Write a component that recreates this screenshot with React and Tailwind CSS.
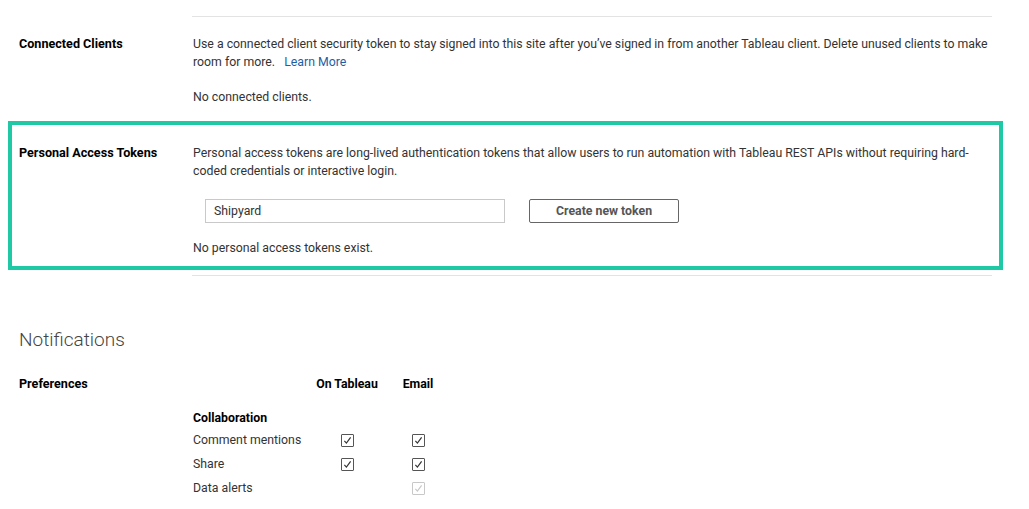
const font = { fontFamily: 'Roboto, "Liberation Sans", sans-serif' }

function Checkbox({ disabled }) {
  return (
    <span
      className={`inline-flex w-[13px] h-[13px] items-center justify-center rounded-[1px] border ${
        disabled ? 'border-[#c8c8c8] text-[#c8c8c8]' : 'border-[#555] text-[#333]'
      }`}
    >
      <svg viewBox="0 0 12 12" className="w-[11px] h-[11px]" fill="none" stroke="currentColor" strokeWidth="1.3">
        <path d="M2.6 6.4 L4.8 8.8 L9.4 2.6" />
      </svg>
    </span>
  )
}

function Row({ label, children, className = '' }) {
  return (
    <div className={`flex ${className}`}>
      <div className="w-[174px] shrink-0 text-[12.6px] font-bold text-black">{label}</div>
      <div className="flex-1">{children}</div>
    </div>
  )
}

export default function App() {
  return (
    <div className="w-[1029px] h-[509px] overflow-hidden bg-white text-[12.3px] leading-[18px] text-[#333]" style={font}>
      <div className="pt-4">
        <div className="ml-[192px] mr-[37px] border-t border-[#e3e3e3]" />
      </div>

      {/* Connected clients */}
      <Row label="Connected Clients" className="pl-[19px] pr-[37px] mt-[18px]">
        <p>
          Use a connected client security token to stay signed into this site after you’ve signed in from another Tableau client. Delete unused clients to make room for more.{'\u00a0\u00a0\u00a0'}
          <a className="text-[#1f5ea3]">Learn More</a>
        </p>
        <p className="mt-[17px]">No connected clients.</p>
      </Row>

      {/* Highlighted section */}
      <div className="mx-[8px] mr-[26px] mt-[15px] border-[4px] border-[#20c9a6] pl-[7px] pr-[7px] pt-[19px] pb-[9px]">
        <Row label="Personal Access Tokens">
          <p className="pr-[20px]">
            Personal access tokens are long-lived authentication tokens that allow users to run automation with Tableau REST APIs without requiring hard-coded credentials or interactive login.
          </p>
          <div className="mt-[19px] flex items-center gap-[24px] pl-[12px]">
            <div className="w-[300px] h-[24px] border border-[#c9c9c9] px-[8px] flex items-center">Shipyard</div>
            <button className="w-[150px] h-[24px] rounded-[2px] border border-[#666] font-bold text-[#555]">
              Create new token
            </button>
          </div>
          <p className="mt-[16px]">No personal access tokens exist.</p>
        </Row>
      </div>

      <div className="mt-[5px] ml-[192px] mr-[37px] border-t border-[#e3e3e3]" />

      {/* Notifications */}
      <div className="pl-[19px] mt-[52px] text-[19px] leading-[24px] font-light text-[#444]">Notifications</div>

      <Row label="Preferences" className="pl-[19px] mt-[23px]">
        <div className="grid grid-cols-[115px_64px_64px] gap-x-[7px]">
          <div />
          <div className="text-center font-bold text-black whitespace-nowrap">On Tableau</div>
          <div className="text-center font-bold text-black whitespace-nowrap">Email</div>

          <div className="col-span-3 mt-[16px] font-bold text-black">Collaboration</div>

          <div className="mt-[4px] whitespace-nowrap">Comment mentions</div>
          <div className="mt-[4px] flex justify-center items-center"><Checkbox /></div>
          <div className="mt-[4px] flex justify-center items-center"><Checkbox /></div>

          <div className="mt-[6px]">Share</div>
          <div className="mt-[6px] flex justify-center items-center"><Checkbox /></div>
          <div className="mt-[6px] flex justify-center items-center"><Checkbox /></div>

          <div className="mt-[6px]">Data alerts</div>
          <div className="mt-[6px]" />
          <div className="mt-[6px] flex justify-center items-center"><Checkbox disabled /></div>
        </div>
      </Row>
    </div>
  )
}
